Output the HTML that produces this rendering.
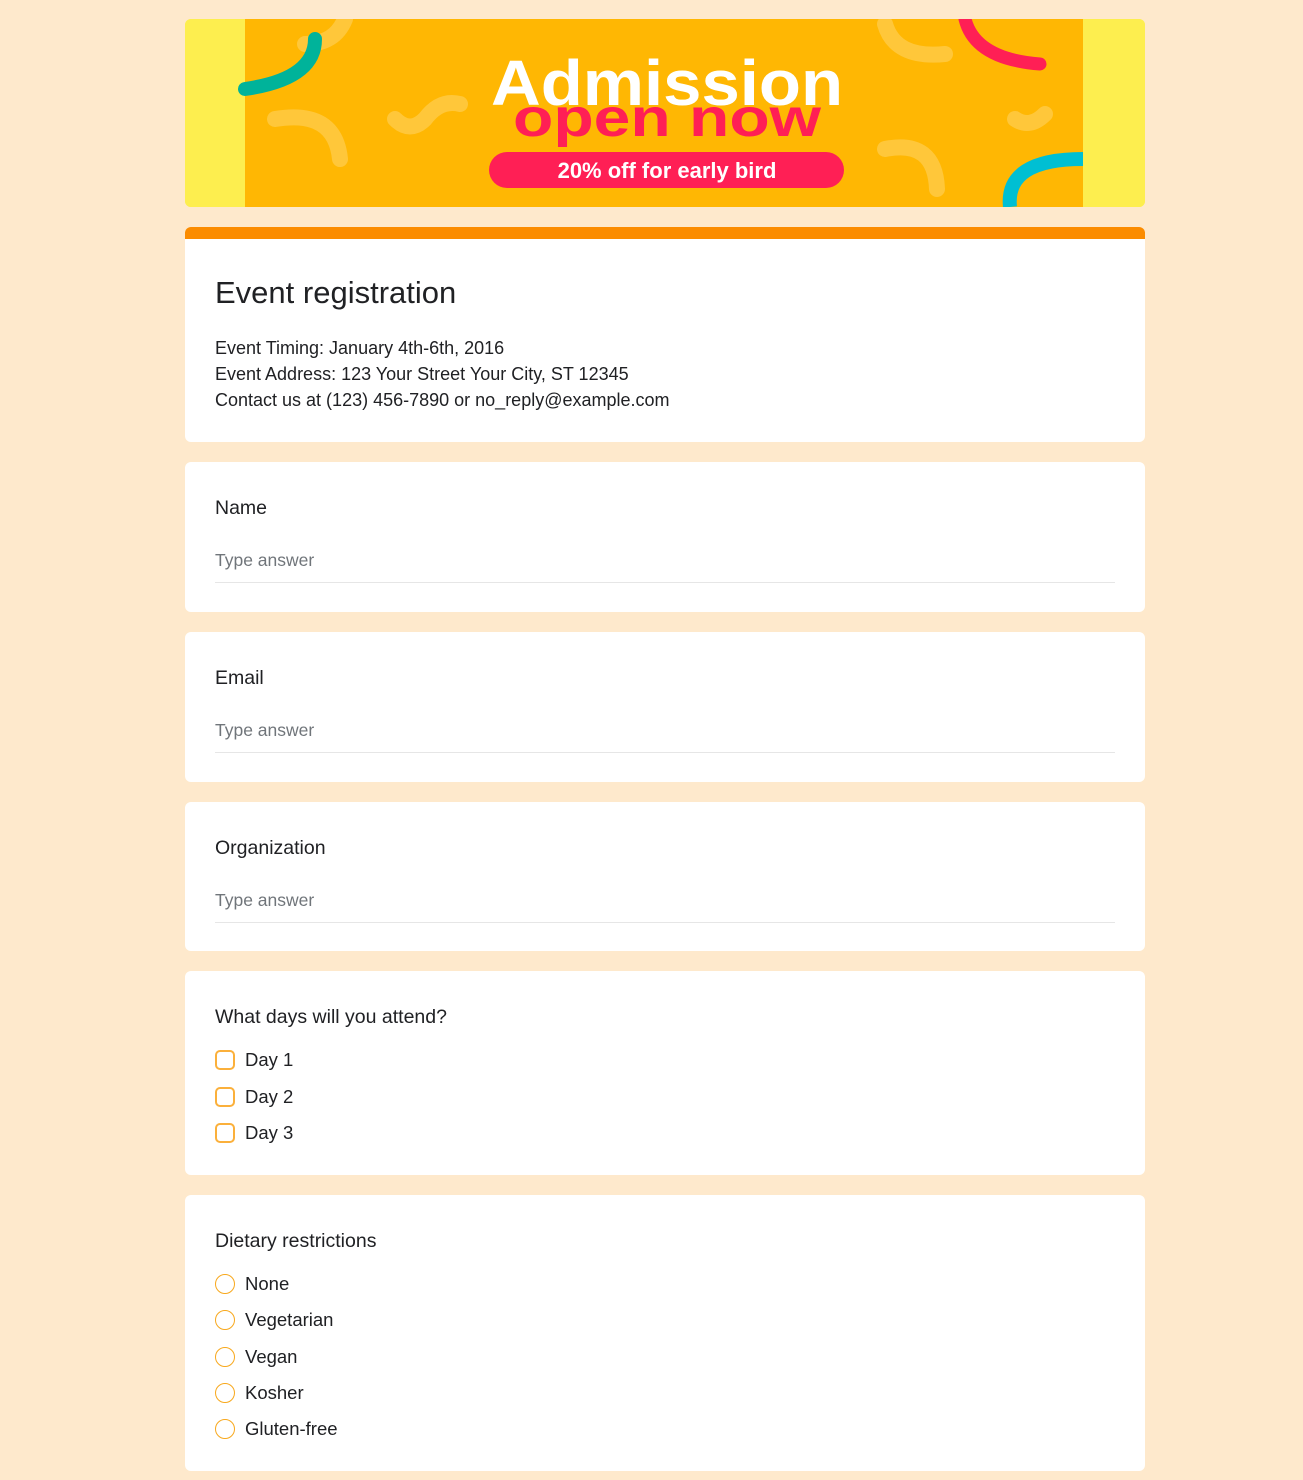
<!DOCTYPE html>
<html><head><meta charset="utf-8"><style>
*{box-sizing:border-box;margin:0;padding:0}
body{width:1303px;height:1480px;background:#fee9cc;font-family:"Liberation Sans","DejaVu Sans",sans-serif;color:#202124;overflow:hidden;position:relative}
.wrap{position:absolute;left:185px;width:960px}
.banner{top:19px;height:188px;border-radius:6px;overflow:hidden;background:#fdee4f}
.card{background:#fff;border-radius:6px;padding:0 30px;position:absolute;left:185px;width:960px}
.q{font-size:19.5px;color:#202124}
.inp{position:absolute;left:30px;right:30px;border-bottom:1px solid #e6e6e6;font-size:17.5px;color:#70757a;padding-bottom:11px}
.opt{position:absolute;left:30px;font-size:18.5px;display:flex;align-items:center}
.cb{width:20px;height:20px;border:2px solid #fbb03b;border-radius:5px;margin-right:10px}
.rb{width:20px;height:20px;border:1.5px solid #f8a81d;border-radius:50%;margin-right:10px}
</style></head><body>
<div class="wrap banner">
<svg width="960" height="188" viewBox="0 0 960 188">
<rect x="0" y="0" width="960" height="188" fill="#fdee4f"/>
<rect x="60" y="0" width="838" height="188" fill="#ffb703"/>
<g fill="none" stroke="#ffc73a" stroke-width="16" stroke-linecap="round">
<path d="M90 100 Q150 90 155 140"/><path d="M120 25 Q150 25 160 0"/>
<path d="M210 100 Q225 115 240 100 Q255 80 275 85"/>
<path d="M700 5 Q710 40 760 35"/><path d="M700 130 Q750 120 752 170"/>
<path d="M830 100 Q845 110 860 95"/>
</g>
<path d="M60 70 Q130 60 130 20" fill="none" stroke="#00b39a" stroke-width="14" stroke-linecap="round"/>
<path d="M780 0 Q790 40 855 45" fill="none" stroke="#ff1f55" stroke-width="13" stroke-linecap="round"/>
<path d="M825 188 Q820 140 898 140" fill="none" stroke="#00bfd3" stroke-width="14"/>
<text x="482" y="86" text-anchor="middle" font-family="Liberation Sans" font-weight="bold" font-size="64" textLength="352" lengthAdjust="spacingAndGlyphs" fill="#fff">Admission</text>
<text x="482" y="117" text-anchor="middle" font-family="Liberation Sans" font-size="54" font-weight="bold" textLength="308" lengthAdjust="spacingAndGlyphs" fill="#ff1f55">open now</text>
<rect x="304" y="133" width="355" height="36" rx="18" fill="#ff1f55"/>
<text x="482" y="159" text-anchor="middle" font-family="Liberation Sans" font-weight="bold" font-size="22" fill="#fff">20% off for early bird</text>
</svg>
</div>
<div class="card" style="top:227px;height:215px;border-top:12px solid #fb8c00">
<div style="position:absolute;top:36px;left:30px;font-size:31px">Event registration</div>
<div style="position:absolute;top:96px;left:30px;font-size:18px;line-height:26px">Event Timing: January 4th-6th, 2016<br>Event Address: 123 Your Street Your City, ST 12345<br>Contact us at (123) 456-7890 or no_reply@example.com</div>
</div>
<div class="card" style="top:462px;height:150px"><div class="q" style="position:absolute;top:35px">Name</div><div class="inp" style="top:88px">Type answer</div></div>
<div class="card" style="top:632px;height:150px"><div class="q" style="position:absolute;top:35px">Email</div><div class="inp" style="top:88px">Type answer</div></div>
<div class="card" style="top:802px;height:149px"><div class="q" style="position:absolute;top:35px">Organization</div><div class="inp" style="top:88px">Type answer</div></div>
<div class="card" style="top:971px;height:204px"><div class="q" style="position:absolute;top:35px">What days will you attend?</div>
<div class="opt" style="top:78px"><span class="cb"></span>Day 1</div>
<div class="opt" style="top:115px"><span class="cb"></span>Day 2</div>
<div class="opt" style="top:151px"><span class="cb"></span>Day 3</div>
</div>
<div class="card" style="top:1195px;height:276px"><div class="q" style="position:absolute;top:35px">Dietary restrictions</div>
<div class="opt" style="top:78px"><span class="rb"></span>None</div>
<div class="opt" style="top:114px"><span class="rb"></span>Vegetarian</div>
<div class="opt" style="top:151px"><span class="rb"></span>Vegan</div>
<div class="opt" style="top:187px"><span class="rb"></span>Kosher</div>
<div class="opt" style="top:223px"><span class="rb"></span>Gluten-free</div>
</div>
</body></html>
